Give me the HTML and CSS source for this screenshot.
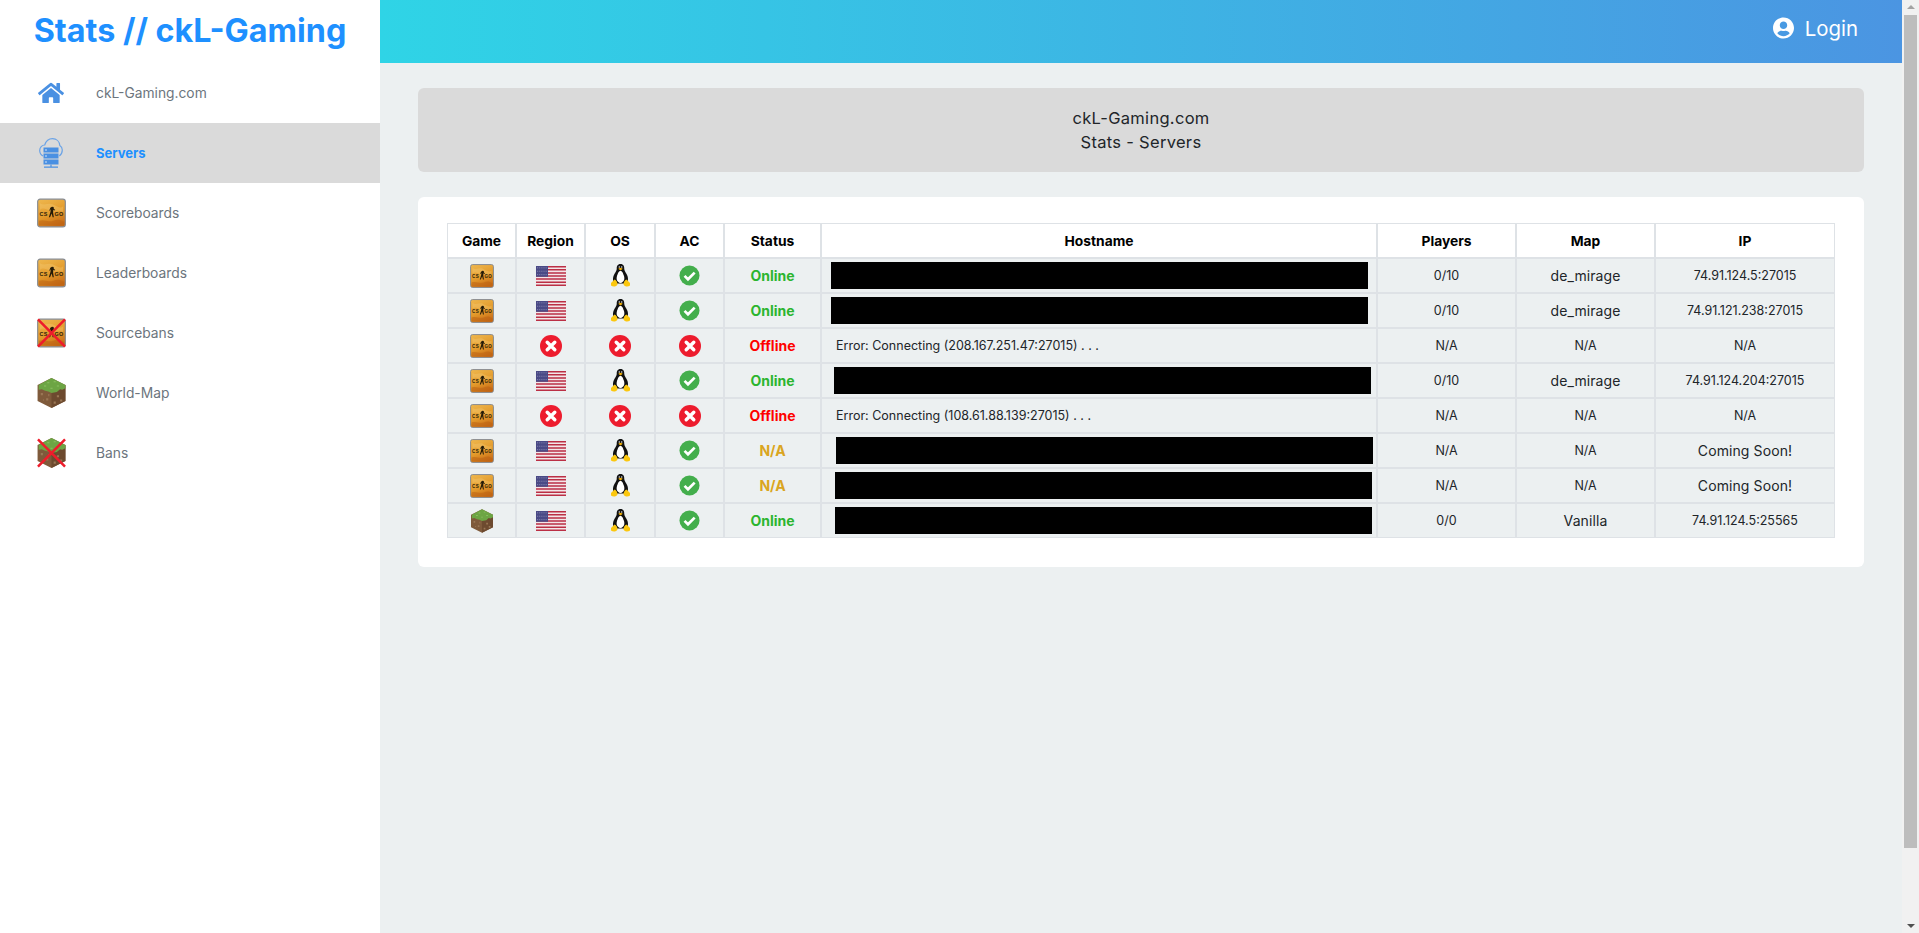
FILE: index.html
```html
<!DOCTYPE html>
<html>
	<head>
		<meta charset="UTF-8">
		<title>Stats // ckL-Gaming</title>
		<link rel="stylesheet" href="styles.css">
	</head>
	<body>
		<!-- icon sprite -->
		<svg class="sprite" xmlns="http://www.w3.org/2000/svg">
			<defs>
				<linearGradient id="csBg" x1="0.2" y1="0" x2="0.6" y2="1">
					<stop offset="0" stop-color="#edb54c"/>
					<stop offset="0.55" stop-color="#e39a2b"/>
					<stop offset="1" stop-color="#c96c17"/>
				</linearGradient>
			</defs>
			<symbol id="i-csgo" viewBox="0 0 30 30">
				<rect x="0.7" y="0.7" width="28.6" height="28.6" rx="2.5" fill="url(#csBg)" stroke="#868b92" stroke-width="1.2"/>
				<path d="M3 5c5 3 9-1 13 1s8 5 11 2v6c-5-2-8 1-13-1S6 9 3 12z" fill="#f6cf7a" opacity="0.35"/>
				<path d="M2 23c6-2 10 2 15 0s7-1 11 1v4H2z" fill="#b95f12" opacity="0.5"/>
				<text x="2.600" y="18" class="cs-text">CS</text>
				<text x="18" y="18" class="cs-text">GO</text>
				<path d="M15.500 8.500l1.700.3.2 1.700 1.500 1.300-.5.6-1.400-.8-.4 2.600.8 5.300h-1.200l-1-4.100-1.700 4.100h-1.200l1.700-5.800.2-2.800-.8 1.700-.7-.3 1.100-2.700z" fill="#241a08"/>
			</symbol>
			<symbol id="i-flag" viewBox="0 0 30 13" preserveAspectRatio="none">
				<rect width="30" height="13" fill="#f3e6e8"/>
				<path d="M0 0h30v1H0zM0 2h30v1H0zM0 4h30v1H0zM0 6h30v1H0zM0 8h30v1H0zM0 10h30v1H0zM0 12h30v1H0z" fill="#bb2f45"/>
				<rect width="12" height="7" fill="#4a4a86"/>
				<path d="M1 1.200h10M1 3.400h10M1 5.600h10" stroke="#c9c9e0" stroke-width="0.5" stroke-dasharray="0.7 1.200"/>
			</symbol>
			<symbol id="i-tux" viewBox="0 0 38 46">
				<path d="M19 0c-6 0-8 5-7.500 10 0 4-4.500 8-6.500 14-2 6-1 13 3 15h22c4-2 5-9 3-15-2-6-6.500-10-6.500-14C27 5 25 0 19 0z" fill="#111"/>
				<path d="M19 14c-4 0-5 5-7 10-2 6 0 13 7 14 7-1 9-8 7-14-2-5-3-10-7-10z" fill="#fff"/>
				<circle cx="16.500" cy="6" r="1.400" fill="#fff"/>
				<circle cx="21.500" cy="6" r="1.400" fill="#fff"/>
				<path d="M14.500 9.500l4.500-2 4.500 2-4.500 3.500z" fill="#f5b50a"/>
				<path d="M0 38l7-7c4 1 6 6 6 10-3 5-9 5-13 2z" fill="#fbc70f"/>
				<path d="M38 38l-7-7c-4 1-6 6-6 10 3 5 9 5 13 2z" fill="#fbc70f"/>
			</symbol>
			<symbol id="i-ok" viewBox="0 0 22 22">
				<circle cx="11" cy="11" r="10.500" fill="#43ae4c"/>
				<path d="M5.800 11.400l3.600 3.600 7-7" fill="none" stroke="#fff" stroke-width="2.800"/>
			</symbol>
			<symbol id="i-err" viewBox="0 0 22 22">
				<circle cx="11" cy="11" r="11" fill="#ed1c2e"/>
				<path d="M7.200 7.200l7.600 7.600M14.800 7.200l-7.600 7.600" fill="none" stroke="#fff" stroke-width="3.400" stroke-linecap="round"/>
			</symbol>
			<symbol id="i-grass" viewBox="0 0 26 28">
				<path d="M13 0l13 6.500v15L13 28 0 21.500v-15z" fill="#7f5a3b"/>
				<path d="M13 13L26 6.500v15L13 28z" fill="#6d4a2f"/>
				<path d="M13 0l13 6.500v3l-3 1.500-2-.5-3 2.500-5 1-3-1.500-3-.5-3-1.500-3 .5V6.500z" fill="#6da544"/>
				<path d="M9 4h2v1H9zM15 3h2v1h-2zM18 7h2v1h-2zM6 7h2v1H6zM12 9h2v1h-2z" fill="#8cc061"/>
				<path d="M3 14h2v2H3zM8 19h2v2H8zM18 16h2v2h-2zM21 20h2v2h-2zM5 20h1v1H5zM15 22h2v2h-2zM10 15h1v2h-1z" fill="#9a7755"/>
			</symbol>
			<symbol id="i-cross" viewBox="0 0 30 30">
				<path d="M1 1l28 28M29 1L1 29" stroke="#ee1c2b" stroke-width="2.600"/>
			</symbol>
			<symbol id="i-home" viewBox="0 0 576 512">
				<path d="M280.370 148.260L96 300.110V464a16 16 0 0 0 16 16l112.060-.29a16 16 0 0 0 15.920-16V368a16 16 0 0 1 16-16h64a16 16 0 0 1 16 16v95.640a16 16 0 0 0 16 16.050L464 480a16 16 0 0 0 16-16V300L295.670 148.260a12.190 12.190 0 0 0-15.300 0zM571.600 251.470L488 182.560V44.050a12 12 0 0 0-12-12h-56a12 12 0 0 0-12 12v72.610L318.470 43a48 48 0 0 0-61 0L4.340 251.470a12 12 0 0 0-1.600 16.900l25.500 31A12 12 0 0 0 45.150 301l235.220-193.740a12.190 12.190 0 0 1 15.300 0L530.900 301a12 12 0 0 0 16.900-1.600l25.500-31a12 12 0 0 0-1.700-16.930z" fill="#4a90e2"/>
			</symbol>
			<symbol id="i-cloud" viewBox="0 0 24 30">
				<path d="M4 18C1.700 16.700.7 14.500.7 12.500c0-3 2.300-5.500 5-5.500C7 3 10 .7 13.500.7c4 0 7 2.800 7.300 6.800 1.700 1 2.500 2.800 2.500 4.500 0 2.500-1 4.500-3 6" fill="none" stroke="#6ba3e6" stroke-width="1.200"/>
				<path d="M4.500 9.500h15v5h-15zM4.500 15.500h15v5h-15zM4.500 21.500h15v5h-15z" fill="#4a90e2"/>
				<path d="M6 11.500h2v1H6zM6 17.500h2v1H6zM6 23.500h2v1H6z" fill="#cfe2f8"/>
				<path d="M12 26.500v2.500M5 29.200h14" stroke="#4a90e2" stroke-width="1.200"/>
			</symbol>
			<symbol id="i-user" viewBox="0 0 496 512">
				<path d="M248 8C111 8 0 119 0 256s111 248 248 248 248-111 248-248S385 8 248 8zm0 96c48.600 0 88 39.400 88 88s-39.400 88-88 88-88-39.400-88-88 39.400-88 88-88zm0 344c-58.700 0-111.300-26.600-146.500-68.200 18.800-35.400 55.600-59.800 98.500-59.800 2.400 0 4.800.4 7.100 1.100 13 4.200 26.600 6.900 40.900 6.900 14.300 0 28-2.700 40.900-6.900 2.300-.7 4.700-1.100 7.100-1.100 42.900 0 79.700 24.400 98.500 59.800C359.300 421.400 306.700 448 248 448z" fill="#fff"/>
			</symbol>
		</svg>

		<div id="page">
			<div id="sidebar">
				<h1 class="brand">Stats // ckL-Gaming</h1>
				<ul class="nav">
					<li><span class="slot"><svg class="ic-home"><use href="#i-home"/></svg></span><a>ckL-Gaming.com</a></li>
					<li class="active"><span class="slot"><svg class="ic-cloud"><use href="#i-cloud"/></svg></span><a>Servers</a></li>
					<li><span class="slot"><svg class="ic-side"><use href="#i-csgo"/></svg></span><a>Scoreboards</a></li>
					<li><span class="slot"><svg class="ic-side"><use href="#i-csgo"/></svg></span><a>Leaderboards</a></li>
					<li><span class="slot"><svg class="ic-side"><use href="#i-csgo"/><use href="#i-cross"/></svg></span><a>Sourcebans</a></li>
					<li><span class="slot"><svg class="ic-side"><use href="#i-grass"/></svg></span><a>World-Map</a></li>
					<li><span class="slot"><svg class="ic-side"><use href="#i-grass"/><use href="#i-cross"/></svg></span><a>Bans</a></li>
				</ul>
			</div>
			<div id="main">
				<div class="topbar">
					<svg class="ic-user"><use href="#i-user"/></svg>
					<span class="login">Login</span>
				</div>
				<div class="content">
					<div class="title-box">
						<div>ckL-Gaming.com</div>
						<div>Stats - Servers</div>
					</div>
					<div class="card">
						<table class="servers">
							<colgroup>
								<col class="c-game"><col class="c-region"><col class="c-os"><col class="c-ac"><col class="c-status"><col class="c-host"><col class="c-players"><col class="c-map"><col class="c-ip">
							</colgroup>
							<thead>
								<tr><th>Game</th><th>Region</th><th>OS</th><th>AC</th><th>Status</th><th>Hostname</th><th>Players</th><th>Map</th><th>IP</th></tr>
							</thead>
							<tbody>
								<tr>
									<td><svg class="ic-game"><use href="#i-csgo"/></svg></td>
									<td><svg class="ic-flag"><use href="#i-flag"/></svg></td>
									<td><svg class="ic-tux"><use href="#i-tux"/></svg></td>
									<td><svg class="ic-ok"><use href="#i-ok"/></svg></td>
									<td class="online">Online</td>
									<td class="host"><div class="redact r1"></div></td>
									<td>0/10</td><td class="word">de_mirage</td><td>74.91.124.5:27015</td>
								</tr>
								<tr>
									<td><svg class="ic-game"><use href="#i-csgo"/></svg></td>
									<td><svg class="ic-flag"><use href="#i-flag"/></svg></td>
									<td><svg class="ic-tux"><use href="#i-tux"/></svg></td>
									<td><svg class="ic-ok"><use href="#i-ok"/></svg></td>
									<td class="online">Online</td>
									<td class="host"><div class="redact r1"></div></td>
									<td>0/10</td><td class="word">de_mirage</td><td>74.91.121.238:27015</td>
								</tr>
								<tr>
									<td><svg class="ic-game"><use href="#i-csgo"/></svg></td>
									<td><svg class="ic-err"><use href="#i-err"/></svg></td>
									<td><svg class="ic-err"><use href="#i-err"/></svg></td>
									<td><svg class="ic-err"><use href="#i-err"/></svg></td>
									<td class="offline">Offline</td>
									<td class="host err">Error: Connecting (208.167.251.47:27015) . . .</td>
									<td>N/A</td><td>N/A</td><td>N/A</td>
								</tr>
								<tr>
									<td><svg class="ic-game"><use href="#i-csgo"/></svg></td>
									<td><svg class="ic-flag"><use href="#i-flag"/></svg></td>
									<td><svg class="ic-tux"><use href="#i-tux"/></svg></td>
									<td><svg class="ic-ok"><use href="#i-ok"/></svg></td>
									<td class="online">Online</td>
									<td class="host"><div class="redact r2"></div></td>
									<td>0/10</td><td class="word">de_mirage</td><td>74.91.124.204:27015</td>
								</tr>
								<tr>
									<td><svg class="ic-game"><use href="#i-csgo"/></svg></td>
									<td><svg class="ic-err"><use href="#i-err"/></svg></td>
									<td><svg class="ic-err"><use href="#i-err"/></svg></td>
									<td><svg class="ic-err"><use href="#i-err"/></svg></td>
									<td class="offline">Offline</td>
									<td class="host err">Error: Connecting (108.61.88.139:27015) . . .</td>
									<td>N/A</td><td>N/A</td><td>N/A</td>
								</tr>
								<tr>
									<td><svg class="ic-game"><use href="#i-csgo"/></svg></td>
									<td><svg class="ic-flag"><use href="#i-flag"/></svg></td>
									<td><svg class="ic-tux"><use href="#i-tux"/></svg></td>
									<td><svg class="ic-ok"><use href="#i-ok"/></svg></td>
									<td class="na">N/A</td>
									<td class="host"><div class="redact r3"></div></td>
									<td>N/A</td><td>N/A</td><td class="word">Coming Soon!</td>
								</tr>
								<tr>
									<td><svg class="ic-game"><use href="#i-csgo"/></svg></td>
									<td><svg class="ic-flag"><use href="#i-flag"/></svg></td>
									<td><svg class="ic-tux"><use href="#i-tux"/></svg></td>
									<td><svg class="ic-ok"><use href="#i-ok"/></svg></td>
									<td class="na">N/A</td>
									<td class="host"><div class="redact r4"></div></td>
									<td>N/A</td><td>N/A</td><td class="word">Coming Soon!</td>
								</tr>
								<tr>
									<td><svg class="ic-block"><use href="#i-grass"/></svg></td>
									<td><svg class="ic-flag"><use href="#i-flag"/></svg></td>
									<td><svg class="ic-tux"><use href="#i-tux"/></svg></td>
									<td><svg class="ic-ok"><use href="#i-ok"/></svg></td>
									<td class="online">Online</td>
									<td class="host"><div class="redact r4"></div></td>
									<td>0/0</td><td class="word">Vanilla</td><td>74.91.124.5:25565</td>
								</tr>
							</tbody>
						</table>
					</div>
				</div>
			</div>
			<div id="scrollbar">
				<div class="arrow-up"></div>
				<div class="thumb"></div>
				<div class="arrow-down"></div>
			</div>
		</div>
	</body>
</html>
```

FILE: styles.css
```css
*{
	margin: 0;
	padding: 0;
	box-sizing: border-box;
}
ul,li{
	list-style: none;
}
html,body{
	height: 100%;
	overflow: hidden;
}
body{
	font-family: "Inter", "Open Sans", sans-serif;
	background: #ecf0f1;
	color: #212529;
}
.sprite{
	display: block;
	width: 0;
	height: 0;
	visibility: hidden;
}
.cs-text{
	font-family: "Liberation Sans", sans-serif;
	font-size: 5.6px;
	font-weight: bold;
	letter-spacing: 0.4px;
	fill: #2a1f0a;
}
#page{
	display: flex;
	height: 933px;
}

/* sidebar */
#sidebar{
	width: 380px;
	flex: none;
	background: #fff;
}
.brand{
	height: 63px;
	line-height: 61px;
	text-align: center;
	font-size: 32.300px;
	font-weight: 700;
	color: #1e90ff;
}
.nav li{
	height: 60px;
	display: flex;
	align-items: center;
	padding-left: 36px;
	font-size: 13.800px;
	color: #6c757d;
}
.nav li.active{
	background: #dadada;
	color: #1e90ff;
	font-size: 13px;
	font-weight: 700;
}
.slot{
	width: 30px;
	margin-right: 30px;
	display: flex;
	justify-content: center;
}
.ic-side{
	width: 30px;
	height: 30px;
	margin-left: 1px;
}
.ic-home{
	width: 26px;
	height: 24px;
}
.ic-cloud{
	width: 26px;
	height: 30px;
}

/* main column */
#main{
	flex: 1;
	min-width: 0;
}
.topbar{
	height: 63px;
	display: flex;
	align-items: center;
	justify-content: flex-end;
	padding: 0 44px 7px 0;
	background: linear-gradient(to right, #2fd4e6, #4b95e2);
	color: #fff;
}
.ic-user{
	width: 21px;
	height: 22px;
	margin-right: 11px;
}
.login{
	font-size: 20.400px;
}
.content{
	padding: 25px 38px;
}
.title-box{
	height: 84px;
	padding: 18px 0;
	background: #dadada;
	border-radius: 6px;
	text-align: center;
	font-size: 16.500px;
	letter-spacing: 0.3px;
	line-height: 24px;
}
.card{
	margin-top: 25px;
	padding: 26px 29px 29px;
	background: #fff;
	border-radius: 6px;
}

/* table */
.servers{
	width: 1388px;
	table-layout: fixed;
	border-collapse: separate;
	border-spacing: 0;
	font-size: 12.500px;
	text-align: center;
}
.c-game,.c-region,.c-ac{
	width: 69px;
}
.c-os{
	width: 70px;
}
.c-status{
	width: 97px;
}
.c-host{
	width: 556px;
}
.c-players,.c-map{
	width: 139px;
}
.c-ip{
	width: 180px;
}
.servers th,.servers td{
	height: 35px;
	border: 1px solid #dee2e6;
	vertical-align: middle;
}
.servers th{
	background: #fff;
	color: #000;
	font-size: 13.800px;
	font-weight: 700;
}
.servers td{
	background: #ecf0f1;
}
.servers svg{
	display: block;
	margin: 0 auto;
}
.servers .word{
	font-size: 14px;
	letter-spacing: 0.1px;
}
.ic-game{
	width: 24px;
	height: 24px;
}
.ic-block{
	width: 22px;
	height: 24px;
}
.ic-flag{
	width: 30px;
	height: 20px;
}
.ic-tux{
	width: 19px;
	height: 23px;
}
.ic-ok{
	width: 21px;
	height: 21px;
}
.ic-err{
	width: 22px;
	height: 22px;
}
.online,.offline,.na{
	font-size: 14px;
	font-weight: 700;
}
.online{
	color: #2bb52f;
}
.offline{
	color: #f00;
}
.na{
	color: #daa520;
}
.host{
	text-align: left;
}
.err{
	padding-left: 14px;
}

/* blacked out hostnames */
.redact{
	height: 27px;
	width: 537px;
	background: #000;
}
.r1{
	margin-left: 9px;
}
.r2{
	margin-left: 12px;
}
.r3{
	margin-left: 14px;
}
.r4{
	margin-left: 13px;
}

/* scrollbar */
#scrollbar{
	width: 17px;
	flex: none;
	display: flex;
	flex-direction: column;
	background: #f1f1f1;
}
.arrow-up{
	width: 0;
	height: 0;
	margin: 5px auto 4px;
	border-left: 4px solid transparent;
	border-right: 4px solid transparent;
	border-bottom: 4px solid #a3a3a3;
	flex: none;
}
.thumb{
	height: 833px;
	margin: 2px 2px 0;
	background: #bdbdbd;
	flex: none;
}
.arrow-down{
	width: 0;
	height: 0;
	margin: auto auto 5px;
	border-left: 4px solid transparent;
	border-right: 4px solid transparent;
	border-top: 4px solid #505050;
	flex: none;
}
```
